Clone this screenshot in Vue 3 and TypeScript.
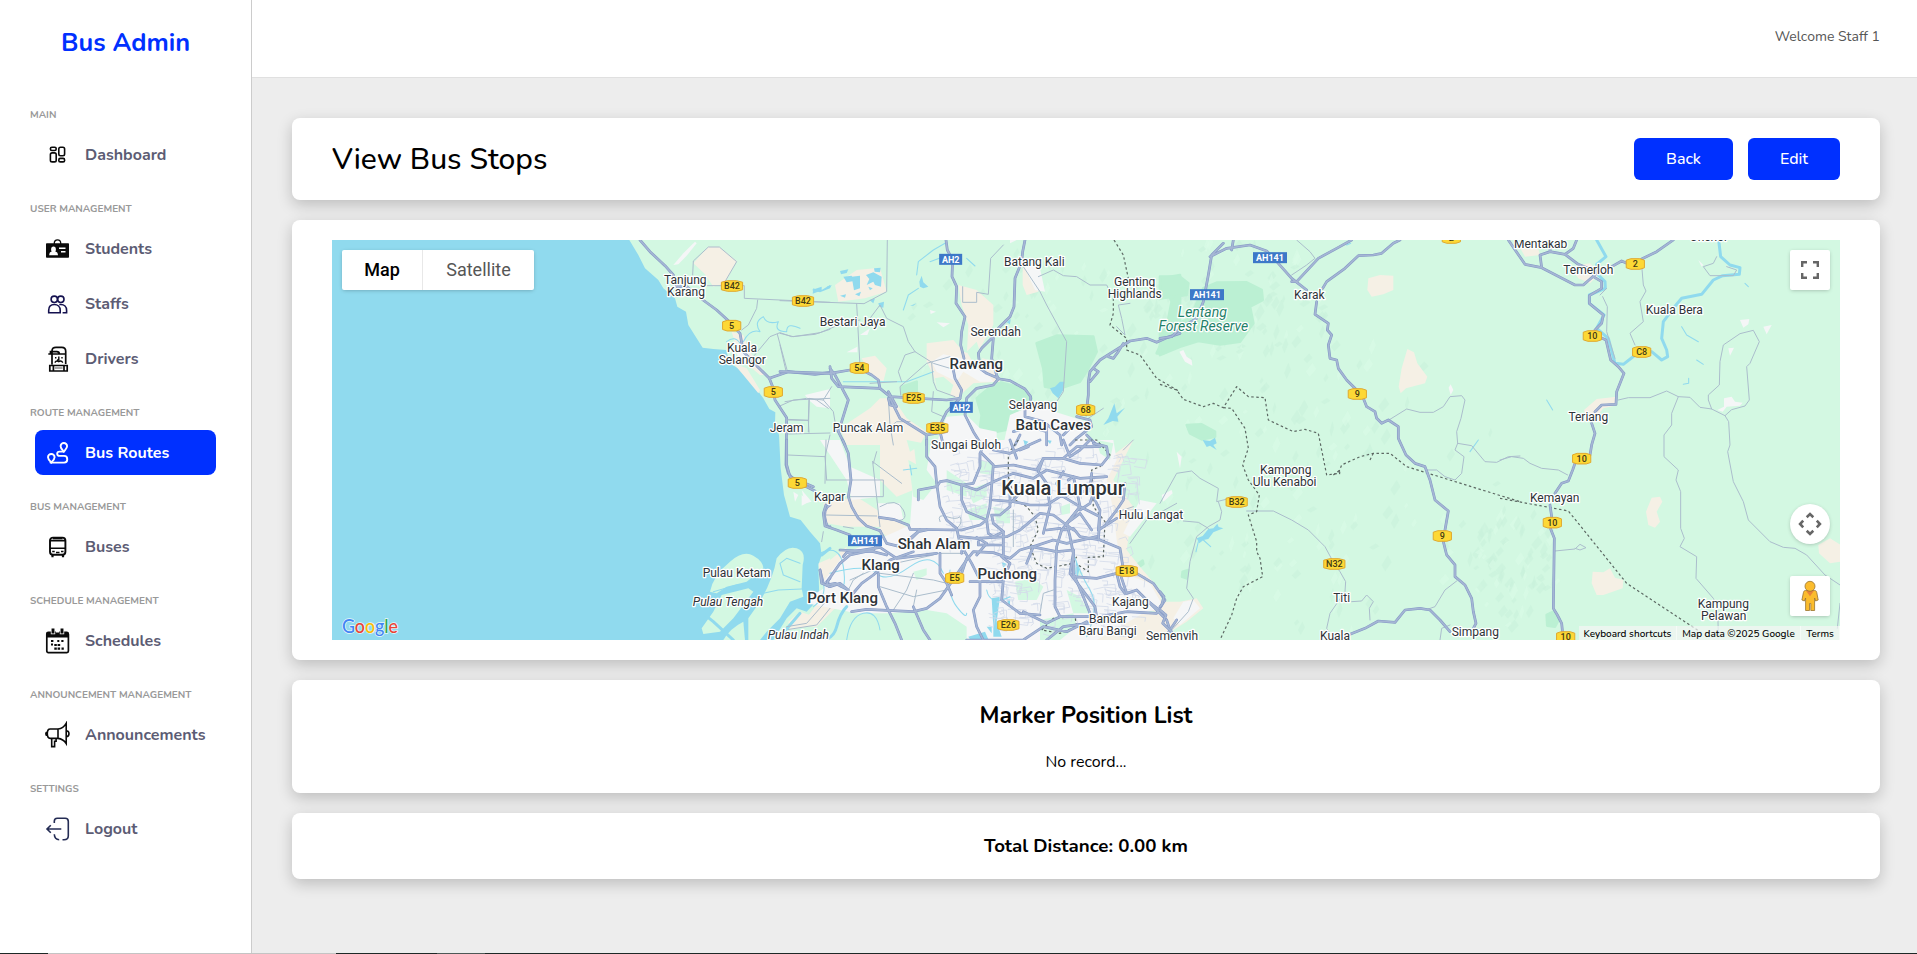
<script setup lang="ts">
type Tile = 'A' | 'B' | 'C' | 'D' | 'E'
interface NavItem { label: string; icon: string; active?: boolean }
interface NavSection { title: string; items: NavItem[] }

const sections: NavSection[] = [
  { title: 'MAIN', items: [{ label: 'Dashboard', icon: 'dashboard' }] },
  {
    title: 'USER MANAGEMENT',
    items: [
      { label: 'Students', icon: 'students' },
      { label: 'Staffs', icon: 'staffs' },
      { label: 'Drivers', icon: 'drivers' },
    ],
  },
  { title: 'ROUTE MANAGEMENT', items: [{ label: 'Bus Routes', icon: 'routes', active: true }] },
  { title: 'BUS MANAGEMENT', items: [{ label: 'Buses', icon: 'buses' }] },
  { title: 'SCHEDULE MANAGEMENT', items: [{ label: 'Schedules', icon: 'schedules' }] },
  { title: 'ANNOUNCEMENT MANAGEMENT', items: [{ label: 'Announcements', icon: 'announcements' }] },
  { title: 'SETTINGS', items: [{ label: 'Logout', icon: 'logout' }] },
]

// The map is drawn from five sheets, each with three units to the pixel.
const origin: Record<Tile, [number, number]> = {
  A: [-2, -5], B: [448, -5], C: [448, 200], D: [828, -5], E: [1168, -5],
}
const tiles: Tile[] = ['A', 'B', 'C', 'D', 'E']
const sheet = (t: Tile) => `translate(${origin[t][0]} ${origin[t][1]}) scale(.33333)`
const px = (t: Tile, x: number) => origin[t][0] + x / 3
const py = (t: Tile, y: number) => origin[t][1] + y / 3

const beige: Record<Tile, string[]> = {
  A: ['M1135 35L1168 35L1220 78L1185 145L1150 155L1125 118L1090 85Z', 'M1210 385L1250 400L1290 465L1285 475L1240 420Z', 'M1205 290L1240 300L1260 350L1310 420L1290 420L1230 370Z', 'M1375 1160L1410 1130L1440 1140L1430 1175L1380 1185Z', 'M1466 985L1500 970L1500 1040L1470 1040Z'],
  B: ['M165 150L230 105L300 98L320 170L255 190L175 200Z', 'M535 150L590 165L640 210L640 270L600 340L560 370L565 270L545 210Z', 'M440 325L520 315L550 350L640 380L660 440L580 445L530 490L470 460L460 420L440 380Z', 'M728 95L760 110L775 170L740 180L728 150Z', 'M245 370L285 362L320 400L310 440L270 420Z', 'M300 490L340 490L380 550L440 590L420 630L200 630L180 580L270 520Z'],
  C: ['M300 0L400 0L410 90L400 150L350 170L300 120Z', 'M130 190L230 170L300 215L380 260L330 300L290 260L200 260L140 250Z', 'M980 60L1060 0L1000 120L1060 200L1040 330L1080 380L1140 450L1150 520L1050 500L1010 400L970 330Z', 'M60 560L120 480L150 360L200 320L190 400L150 450L170 500L110 560Z', 'M600 440L720 400L800 400L820 500L740 520L650 480Z', 'M730 340L860 330L860 370L800 385L750 375Z', 'M900 520L1180 520L1180 600L900 600Z'],
  D: ['M625 130L660 120L700 122L700 165L670 178L635 185L622 165Z', 'M742 342L762 352L772 385L802 425L795 445L738 460L722 475L716 455L725 400Z', 'M0 1100L60 1100L110 1090L130 1120L80 1160L40 1185L0 1180Z'],
  E: ['M50 20L110 25L120 60L75 65Z', 'M210 95L270 85L300 115L270 145L235 130Z', 'M252 525L290 492L350 485L345 512L310 520L290 545L260 555Z', 'M455 788L480 785L487 800L470 830L480 860L465 878L445 870L438 830Z', 'M278 1010L310 1012L330 1000L345 1028L370 1035L368 1060L310 1080L290 1080L275 1045Z', 'M955 930L990 910L1022 930L1022 980L990 985L957 955Z'],
}
const grey: Record<Tile, string[]> = {
  A: ['M1030 90L1060 55L1095 20L1100 25L1070 62L1045 88Z', 'M1390 770L1405 780L1395 800Z', 'M1415 780L1438 800L1415 812Z', 'M1425 480L1500 462L1500 520L1470 510L1435 495Z', 'M1212 340L1235 330L1255 370L1230 375Z'],
  B: ['M450 225L468 230L452 237Z', 'M470 262L510 265L490 277Z', 'M200 352L232 335L232 352Z', 'M240 300L270 280L262 300Z', 'M80 490L110 485L150 520L110 515Z', 'M455 380L490 358L525 365L600 385L640 440L600 440L550 410L530 440L470 410Z', 'M500 545L560 540L600 580L650 590L650 630L470 630L480 590Z', 'M690 540L760 510L920 560L920 630L670 630Z', 'M690 10L720 10L690 25Z', 'M728 80L780 100L795 170L765 165L740 110Z'],
  C: ['M455 0L1000 0L1010 60L980 120L1000 210L1010 300L1030 400L1110 430L1150 500L1090 520L950 600L560 600L560 560L500 520L440 510L330 520L215 520L150 480L125 430L150 400L195 340L290 300L370 265L390 255L400 120L440 90Z', 'M120 0L180 0L210 80L300 120L300 170L215 180L200 120Z', 'M65 150L95 185L75 190Z', 'M290 190L360 190L370 240L300 235Z', 'M1080 180L1130 190L1050 290L1030 280Z', 'M140 440L90 470L80 490L230 520L220 470Z'],
  D: ['M58 350L70 345L80 365L95 375L97 392L75 380Z', 'M866 458L872 448L880 465L872 480Z', 'M5 780L35 765L38 775L10 800Z', 'M70 1100L100 1095L120 1120L60 1170L40 1150Z', 'M50 650L65 665L60 700Z'],
  E: ['M720 255L748 252L745 268L730 278Z', 'M790 275L815 270L800 298Z', 'M685 340L702 338L690 362Z', 'M672 490L695 485L705 500L728 503L720 512L680 515L668 530L652 525L672 515Z', 'M595 75L610 90L605 95Z'],
}
const forest: Record<Tile, string[]> = {
  A: [],
  B: ['M770 325L830 302L940 305L950 350L925 400L900 440L835 462L795 455L790 400Z', 'M590 490L650 440L730 460L755 490L720 540L700 580L650 590L600 580L605 540Z', 'M1145 130L1200 120L1200 330L1150 355L1130 355L1155 300L1175 200Z', 'M365 455L410 440L410 478L365 485Z'],
  C: ['M1070 375L1088 362L1090 372L1075 382Z'],
  D: ['M0 125L60 125L85 145L80 180L0 190Z', 'M130 160L170 143L260 142L305 165L308 195L270 215L280 265L240 320L180 328L115 318L60 335L0 360L0 290L90 250Z', 'M80 570L125 568L165 590L165 605L125 613L90 595Z', 'M68 1010L85 1005L80 1030L66 1025Z'],
  E: ['M140 1140L160 1130L178 1150L165 1175L142 1172Z'],
}
const park: Record<Tile, string[]> = {
  A: [], D: [], E: [],
  B: ['M560 350L590 320L610 380L590 400Z', 'M465 430L490 425L520 450L510 480L470 460Z'],
  C: ['M380 0L430 10L390 35Z', 'M600 60L640 70L635 105L600 100Z', 'M705 425L760 415L790 440L770 480L715 480Z', 'M385 60L440 90L470 130L430 180L400 170Z', 'M560 210L620 190L620 240L570 240Z', 'M220 270L300 260L290 300L240 300Z', 'M500 90L560 130L560 170L500 150Z', 'M640 200L690 210L690 250L650 250Z', 'M840 200L870 190L870 220L845 225Z', 'M240 530L300 530L330 600L230 600Z', 'M780 540L880 520L890 560L840 600L780 600Z', 'M440 560L500 570L570 600L430 600Z', 'M860 450L900 470L930 520L880 520Z', 'M950 0L1000 10L990 60L960 40Z', 'M400 395L440 385L440 405L410 420Z', 'M880 380L910 400L890 410Z', 'M560 150L620 130L620 170L580 190Z'],
}
const lakes: Record<Tile, string[]> = {
  A: ['M1445 165L1475 155L1475 165L1500 150L1500 160L1470 172Z'],
  B: ['M180 108L205 103L200 114L183 118Z', 'M190 125L215 122L222 138L200 142Z', 'M215 125L240 122L240 160L222 166Z', 'M225 178L243 170L238 184Z', 'M180 182L198 178L195 188Z', 'M282 100L302 98L300 112L284 110Z', 'M258 120L280 112L305 125L303 155L285 150L280 140L260 150L268 132Z', 'M265 155L278 160L270 166Z', 'M418 140L425 122L430 142L445 155L430 160L420 155Z', 'M810 460L825 455L840 440L853 440L850 465L835 490L818 475Z', 'M1003 505L1010 535L1035 518L1012 545L1015 560L998 558L970 570L985 550Z', 'M680 262L692 252L690 268Z', 'M268 195L285 190L280 205Z', 'M295 205L312 200L310 218L298 215Z', 'M100 160L120 168L98 176Z', 'M140 155L155 150L150 160Z', 'M410 205L400 212L390 212Z'],
  C: ['M730 0L745 5L735 18Z', 'M800 0L815 2L810 12Z', 'M635 475L660 470L650 545L665 590L640 590L640 560Z', 'M620 560L635 560L635 580Z', 'M888 360L898 390L893 410L885 400Z', 'M565 590L615 575L625 598L570 598Z', 'M680 480L690 478L690 500Z', 'M665 365L680 372L670 385Z'],
  D: ['M128 615L150 618L165 608L170 625L160 630L170 645L150 632L140 636Z', 'M110 910L128 903L145 882L160 880L172 866L176 876L190 880L160 892L145 912L130 915L118 925Z'],
  E: [],
}
const rivers: Record<Tile, string[]> = {
  A: ['M1190 320Q1215 300 1230 325', 'M1240 320Q1260 280 1290 290Q1270 260 1300 245Q1310 270 1345 260Q1330 290 1370 290Q1370 260 1410 280', 'M1300 1075L1345 1065L1415 1062', 'M1350 985L1370 970L1410 985M1350 985L1360 1020L1410 1040', 'M1150 1070L1220 1050L1270 1048'],
  B: ['M410 120L415 80L460 45L495 25', 'M415 160L385 180L370 225', 'M560 70L585 93', 'M450 80L490 65', 'M190 440L300 440L380 440L460 410'],
  C: ['M120 340Q180 310 190 380T180 440', 'M150 400Q260 370 290 400T390 380T490 400', 'M510 390Q500 460 530 500T560 520', 'M620 450Q630 500 690 470', 'M370 90L410 85M390 75L395 105', 'M200 600Q210 530 250 520T300 570', 'M880 340Q900 400 930 450T920 590', 'M130 430Q140 470 100 500'],
  D: ['M560 30L572 25', 'M108 950L115 920', 'M130 915L152 935', 'M930 650L955 615'],
  E: ['M545 275L560 300L595 320', 'M590 375L610 388', 'M550 448L566 445L566 430', 'M735 145L745 155', 'M140 495L158 525'],
}
const wideRivers: Record<Tile, string[]> = {
  A: ['M1500 940L1475 960', 'M1210 1215L1150 1160L1100 1120'],
  B: [],
  C: ['M200 500Q180 520 170 560T120 600', 'M60 520L0 590'],
  D: [],
  E: ['M290 15L318 65L290 88L295 120L315 140L316 160L268 180L268 205L312 240L290 280L325 310L345 385L370 388L425 345L455 350L485 375L503 365L500 345L485 310L490 260L520 220L545 190L605 178L640 135L668 122L718 118L720 98L690 90L662 65L656 15'],
}
const minor: Record<Tile, string[]> = {
  A: ['M1088 120L1090 78L1135 36L1168 36L1220 80L1185 140', 'M1283 195L1280 220L1255 270L1235 285', 'M1270 365L1320 305L1350 293L1385 305L1455 298L1500 283', 'M1342 298L1372 408', 'M1345 515L1390 495L1500 490', 'M1373 553L1435 556L1437 490L1460 495L1495 520M1435 556L1437 592', 'M1375 597L1500 594', 'M1373 660L1485 665L1500 600M1485 665L1490 735', 'M1130 152L1243 152L1243 190L1500 202', 'M1475 920L1480 890', 'M1500 1120L1460 1170L1365 1185'],
  B: ['M0 197L252 206L320 170L322 15', 'M0 295L40 305L120 293L195 262L240 255', 'M0 330L18 408', 'M230 206L240 395', 'M270 250L300 210L320 250L370 275L385 320L405 350L460 385L510 400', 'M405 350L375 360L355 410L365 440M510 365L440 385L360 455L362 480', 'M548 155L548 202L590 202L590 172L625 178L632 70L670 30', 'M730 95L780 170L800 210L860 320L850 470L830 500', 'M775 125L820 105L850 122L890 125L930 150L980 150L990 170M1050 205L1015 210L1025 250L1035 300L1010 275', 'M455 385L460 440L470 465L525 485M270 445L350 440M460 470L455 530L490 545', 'M15 500L80 490L130 495L160 530L170 590M88 490L85 590M20 555L85 556M130 495L155 455', 'M925 550L970 520M325 490L330 570L340 630', 'M390 560L350 560L325 580'],
  C: ['M138 0L135 130M140 120L310 120L310 170L210 170', 'M138 225L290 228M278 65L300 260M278 65L365 130M290 35L280 70M300 200Q350 170 370 210T330 240', 'M190 260L220 265M480 245Q470 220 500 230T540 230Q550 250 530 265', 'M300 440L400 470L500 450M300 400L460 420L500 430M340 510L380 450L400 400M210 420L300 380L460 345', 'M820 450L790 460L780 520M1000 220L1060 200M1190 190L1100 240L1050 310', 'M400 500L410 450M190 480L220 420L250 400M20 560L80 550L150 470', 'M1030 30L1060 0M440 340L560 340M700 320L700 210'],
  D: ['M410 15L450 50L465 70L440 90L395 120', 'M690 553L740 522L780 532L820 532L850 515L870 485L905 482L915 495L903 550L890 590L893 625L935 632L975 680L1010 682L1045 665L1080 663M893 625L885 645L912 665L905 715L885 735L855 725L830 705L800 705', 'M0 805L50 715L95 708L120 730L175 760L170 800L210 790M175 800L185 830L180 855L145 875L110 905L90 980L80 1060L100 1090L85 1130L35 1185', 'M70 858L115 862L145 880', 'M260 828L340 828L395 855L445 885L495 935L522 985L540 1010L557 1040L555 1070L510 1135L500 1180L510 1195', 'M575 1100L605 1098L620 1080L640 1100L628 1120L630 1155', 'M890 1038L855 1065L825 1115L805 1122', 'M840 1215L845 1180L870 1170'],
  E: ['M425 90L430 150L438 168L420 200L430 260L390 295L405 330', 'M308 185L322 215L320 290L345 370M300 180L320 160', 'M355 495L385 488L450 488L500 468L535 485L570 487L600 517L635 522L675 542L695 524L735 513L748 495L740 395L750 385L778 320L760 286L720 296L670 330L660 380L658 450L625 480L625 495L635 522', 'M535 485L515 535L515 570L492 600L492 665L535 705L528 735L542 770L542 880L553 910L540 935L590 965L588 1030L640 1090L653 1120L655 1200', 'M675 542L686 560L690 630L683 650L700 740L730 800L745 855L810 920L850 937L885 940L920 960L975 1020L1020 1050', 'M0 675L35 665L70 670L90 685L125 700L175 705L203 720', 'M165 948L225 942L240 928L258 938L240 945L225 940', 'M1020 1105L1012 1180', 'M650 65L640 85L610 95L630 122L700 122L710 105L680 95'],
}
const majors: Record<Tile, string[]> = {
  A: ['M930 15L960 50L1005 92L1030 120L1040 155L1070 155L1115 192L1160 225L1200 262L1230 295L1240 350L1280 392L1318 430L1328 455L1335 495L1370 548L1368 690L1375 715L1395 738L1455 768', 'M1318 430L1375 410L1455 418L1500 412', 'M1500 810Q1480 820 1485 850T1500 875', 'M1500 1055L1480 1045L1470 1005M1500 1030L1490 1040L1500 1050'],
  B: ['M498 15L502 45L518 75L516 125L530 155L528 205L555 245L545 290L542 330L552 370M520 405L525 430L545 465L540 490L500 530L485 560L490 590', 'M0 410L150 415L210 405L240 402L275 420L295 435L300 460L330 485L500 495L540 490', 'M150 395L155 430L175 455L300 460M150 400L165 420L205 495L185 560L175 590L195 630M325 470L350 515L330 510L325 490M330 490L360 550L440 600L440 630M440 600L500 590', 'M735 15L728 50L725 80L705 130L702 215L690 245L655 280M640 305L605 340L595 355L600 400L620 415L660 432L690 437L735 462L752 485L752 520M640 310L635 370L650 420L655 432L640 450L590 460L560 490L555 540L580 590L605 630', 'M1200 295L1160 308L1130 322L1100 310L1050 318L1015 340L960 375L930 410L925 440L925 480L918 540M1015 350L1000 370L985 365M930 440L955 410L940 400M1030 325L1015 350', 'M735 520L735 545L790 560L840 600L845 630M700 590L750 575L800 590M720 600L705 630M890 545L930 555L935 575L890 610L870 630M920 600L950 630M850 600L870 580', 'M800 570L800 630M480 590L490 630'],
  C: ['M20 0L20 75L30 110L100 140M188 0L205 40L213 120L205 170L215 200L235 235L260 258L300 272', 'M138 195L130 220L135 258L170 270L210 285M120 390L125 430L150 440L180 430L205 450L165 430L140 435L145 420L180 370L210 345L280 330L300 300', 'M298 232L340 238L385 255L390 268L545 270L600 255L620 240', 'M190 350L200 338L300 322L350 355L470 340M215 465L245 430L280 405L330 360L400 335', 'M215 515L260 508L400 515L440 505L480 475L505 440L560 360L580 335L640 338L690 355L720 330L755 320L830 335L880 330', 'M295 400L295 440L320 500L345 550L365 600M400 500L430 570L450 600', 'M440 0L440 50L465 80L470 130L480 200L500 240L530 265L540 310L575 370L600 420L600 470L580 510L590 560L610 600', 'M415 180L415 150L470 140L480 125L500 122L545 135L580 130L600 80L600 40L605 30', 'M545 135L545 180L560 215L620 240L630 200L640 75L605 40M545 135L590 150L640 125', 'M440 270L415 275L395 295M540 290L590 295L680 290L720 270L780 220L820 225L880 270', 'M595 305L595 315L670 315M620 240L625 280L640 290L670 275L670 350M590 345L620 310L590 292', 'M640 80L700 75L770 90L790 55L850 55L900 70L965 75L985 50L980 20L940 10M640 125L700 100L760 115L800 90L840 100L900 115L980 110M640 30L690 40L780 0M790 55L775 95L800 130L810 200L790 280', 'M690 120L690 200L660 225L635 225L640 250L670 275M640 180L700 185L750 195L800 195L840 170L930 150M720 160L690 190', 'M870 50L850 0M870 50L900 30L930 0M850 55L890 20L960 20M850 95L830 130L850 170L900 200L960 230L955 300', 'M865 120L880 110L890 150L900 200L870 240L845 270L830 320L825 420L825 500L840 530', 'M935 100L930 150L960 210L955 270L1010 235M900 210L930 190L940 160M900 200L860 250L870 290L880 340L870 400L900 440L945 500L950 530', 'M845 270L880 265L900 290L960 300L1020 325L1030 390M880 330L880 400L910 470L930 520M880 410L950 415L1010 400', 'M1020 400L1040 460L1070 450L1110 490L1160 540L1180 600M1070 400L1120 430L1155 480L1130 520L1040 515L960 530L840 530L800 550L730 515M665 350L690 370L670 420L665 480L720 520L780 525M570 425L665 425', 'M480 340L480 400L500 430L515 465M760 320L820 300L860 310L950 290M800 270L840 265', 'M1010 400L1020 440L1035 460M1150 520L1100 480M560 355L545 400M545 340L545 300', 'M960 545L850 560L800 600M1190 540L1150 600M560 600L730 600L790 560L860 575L920 545', 'M710 55L690 0M760 320L740 370M745 20L720 30M860 250L900 220L935 270M1035 130L1030 180L1010 210L980 250', 'M180 330L280 335L320 345M300 272L320 310L360 320L420 270'],
  D: ['M0 310L35 305L60 280L110 250L130 200L145 120L155 60L190 25M150 65L200 40L270 30L320 48L355 85L395 130L440 165M220 15L215 45M395 140L410 140L475 70L530 40L575 15M488 160L500 140L555 100L595 62L640 60L665 55L700 25L720 15', 'M470 200L465 238L505 265L502 285L515 300L505 330L510 370L530 375L535 400L560 435L590 465L610 490L620 515L645 530L650 550L665 565L685 555L715 575L715 610L738 660L765 685L795 695L810 735L825 795L865 828L855 885L850 920L860 960L885 990L885 1025L915 1050L935 1090L940 1130L948 1165L940 1180', 'M570 1198L615 1180L655 1158L705 1162L735 1125L780 1120L810 1125L840 1155L870 1190', 'M0 1070L12 1085L5 1110L0 1115M0 1125L18 1140L8 1165L35 1190'],
  E: ['M25 15L75 88L125 98L225 150L250 150L290 115M150 20L150 50L195 58L235 88L290 110M150 50L120 60L125 98M195 58L220 40L230 15M335 95L365 78L380 85M425 72L470 50L520 15', 'M280 125L305 140L305 160L268 182L268 205L310 240L305 265L285 285M285 300L318 315L332 375L355 395L372 415L350 470L348 508L305 510L285 530M275 565L285 595L275 630L270 660M225 685L218 705L205 738L185 745L165 775M150 810L155 845M152 882L163 910L160 1120L172 1140L185 1165L188 1195'],
}
const borders: Record<Tile, string[]> = {
  A: [],
  B: ['M1002 15L1030 60L1045 130M1000 190L1000 235L990 270L1040 310L1040 345L1080 360L1130 430L1200 470'],
  C: ['M715 0L685 40L685 110L705 180L740 200L765 230L775 270L750 320L770 370L800 385L880 370L890 350M885 0L950 0L990 45L960 80L935 90L940 200L975 245L970 350L925 352L925 395L895 375M785 570L820 535L885 530L890 560L840 580Z'],
  D: ['M0 448L50 465L70 493L130 515L160 505L190 518L230 455L265 485L315 488L325 555L400 590L435 583L475 595L500 720L535 715L545 690L600 665L640 655L690 655L740 695L1080 800', 'M190 518L215 520L255 580L265 640L248 690L265 735L298 780L290 830L265 840L290 920L290 950L300 970L308 1025L250 1055L230 1090L215 1140L180 1215', 'M640 655L630 675M520 720L540 705L538 722'],
  E: ['M0 790L120 812L205 828L235 865L380 1045L600 1190'],
}

let seed = 20251
const rnd = () => {
  seed = (seed * 1103515245 + 12345) % 2147483648
  return seed / 2147483648
}

// Relief facets of the highland areas.
const facets: { d: string; dark: boolean }[] = []
const ranges: [number, number, number, number][] = [
  [905, 200, 150, 170], [1000, 250, 170, 150], [700, 100, 130, 90], [1180, 330, 45, 60], [900, 60, 90, 60],
]
for (const [cx, cy, rx, ry] of ranges) {
  for (let i = 0; i < 75; i++) {
    const a = rnd() * 6.283
    const r = Math.sqrt(rnd())
    const x = cx + Math.cos(a) * rx * r
    const y = cy + Math.sin(a) * ry * r
    const w = 2 + rnd() * 5
    const h = 3 + rnd() * 8
    facets.push({
      d: `M${x.toFixed(1)} ${y.toFixed(1)}l${w.toFixed(1)} ${(-h).toFixed(1)}l${(w * 0.6).toFixed(1)} ${(h * 0.7).toFixed(1)}l${(-w).toFixed(1)} ${(h * 0.9).toFixed(1)}z`,
      dark: rnd() > 0.35,
    })
  }
}

// Local streets of the metropolitan area.
let streets = ''
for (let i = 0; i < 330; i++) {
  const x = 610 + rnd() * 190
  const y = 208 + rnd() * 180
  if (x < 650 && y > 310) continue
  const w = 4 + rnd() * 12
  const h = 3 + rnd() * 9
  const s = (rnd() - 0.5) * 5
  streets += `M${x.toFixed(1)} ${y.toFixed(1)}l${w.toFixed(1)} ${s.toFixed(1)}l${(-s).toFixed(1)} ${h.toFixed(1)}${rnd() > 0.5 ? `l${(-w * 0.7).toFixed(1)} ${(-s).toFixed(1)}` : ''}`
}

type Label = [Tile, number, number, string, string?]
const labels: Label[] = [
  ['A', 1066, 136, 'Tanjung'], ['A', 1068, 172, 'Karang'], ['A', 1236, 340, 'Kuala'], ['A', 1237, 376, 'Selangor'],
  ['A', 1370, 580, 'Jeram'], ['A', 1220, 1015, 'Pulau Ketam'], ['A', 1194, 1102, 'Pulau Tengah', 'it'], ['A', 1405, 1200, 'Pulau Indah', 'it'],
  ['B', 218, 262, 'Bestari Jaya'], ['B', 763, 81, 'Batang Kali'], ['B', 1064, 142, 'Genting'], ['B', 1064, 178, 'Highlands'],
  ['B', 647, 292, 'Serendah'], ['B', 759, 512, 'Selayang'], ['B', 264, 580, 'Puncak Alam'], ['C', 558, 15, 'Sungai Buloh'],
  ['B', 589, 388, 'Rawang', 'town'], ['B', 820, 572, 'Batu Caves', 'town'], ['C', 149, 172, 'Kapar'],
  ['C', 849, 145, 'Kuala Lumpur', 'city'], ['C', 1113, 226, 'Hulu Langat'], ['C', 462, 313, 'Shah Alam', 'town'],
  ['C', 302, 376, 'Klang', 'town'], ['C', 682, 403, 'Puchong', 'town'], ['C', 188, 474, 'Port Klang', 'town'],
  ['C', 1051, 488, 'Kajang'], ['C', 984, 538, 'Bandar'], ['C', 983, 574, 'Baru Bangi'], ['C', 1176, 588, 'Semenyih'],
  ['D', 448, 181, 'Karak'], ['D', 127, 232, 'Lentang', 'green'], ['D', 130, 274, 'Forest Reserve', 'green'],
  ['D', 377, 706, 'Kampong'], ['D', 374, 742, 'Ulu Kenaboi'], ['D', 545, 1089, 'Titi'], ['D', 525, 1203, 'Kuala'], ['D', 946, 1192, 'Simpang'],
  ['E', 122, 28, 'Mentakab'], ['E', 265, 105, 'Temerloh'], ['E', 523, 226, 'Kuala Bera'], ['E', 265, 547, 'Teriang'],
  ['E', 164, 790, 'Kemayan'], ['E', 670, 1108, 'Kampung'], ['E', 671, 1144, 'Pelawan'], ['E', 627, 8, 'Chenor'],
]
const shift = (k?: string) => (k === 'city' ? 6.4 : k === 'town' ? 4.6 : k === 'green' ? 4.4 : 3.7)

const shields: [Tile, number, number, string][] = [
  ['A', 1206, 153, 'B42'], ['A', 1419, 198, 'B42'], ['A', 1205, 272, '5'], ['A', 1330, 471, '5'], ['A', 1402, 744, '5'],
  ['B', 238, 399, '54'], ['B', 401, 489, 'E25'], ['B', 472, 579, 'E35'], ['B', 917, 525, '68'],
  ['C', 524, 414, 'E5'], ['C', 685, 555, 'E26'], ['C', 1040, 393, 'E18'],
  ['D', 230, 801, 'B32'], ['D', 523, 987, 'N32'], ['D', 592, 477, '9'], ['D', 847, 903, '9'], ['D', 874, 9, '2'],
  ['E', 406, 87, '2'], ['E', 277, 303, '10'], ['E', 425, 351, 'C8'], ['E', 245, 671, '10'], ['E', 157, 863, '10'], ['E', 197, 1206, '10'],
]
const hex = (t: string) => {
  const w = t.length > 2 ? 10.6 : 9.1
  return `M${-w} -3.8L-4.5 -5.3H4.5L${w} -3.8V3.8L4.5 5.3H-4.5L${-w} 3.8Z`
}
const highways: [Tile, number, number, string][] = [
  ['B', 512, 73, 'AH2'], ['B', 544, 517, 'AH2'], ['C', 255, 302, 'AH141'], ['D', 141, 179, 'AH141'], ['D', 330, 68, 'AH141'],
]
const brand: [string, string][] = [['G', '#4285f4'], ['o', '#ea4335'], ['o', '#fbbc04'], ['g', '#4285f4'], ['l', '#34a853'], ['e', '#ea4335']]
</script>

<template>
  <div class="app">
    <aside class="sidebar">
      <h1 class="logo">Bus Admin</h1>
      <nav>
        <section v-for="s in sections" :key="s.title" class="group">
          <div class="group-title">{{ s.title }}</div>
          <div class="group-items">
            <a v-for="i in s.items" :key="i.label" class="item" :class="{ active: i.active }">
              <svg class="icon" :class="i.icon" viewBox="0 0 28 28" fill="none" stroke="currentColor" stroke-width="1.6">
                <template v-if="i.icon === 'dashboard'">
                  <rect x="6.4" y="6.2" width="5.8" height="3.3" rx="1.5" />
                  <rect x="6.4" y="11.9" width="5.8" height="9" rx="1.7" />
                  <rect x="14.8" y="6.2" width="5.8" height="8.6" rx="1.7" />
                  <rect x="14.8" y="17.4" width="5.8" height="3.5" rx="1.5" />
                </template>
                <template v-else-if="i.icon === 'students'">
                  <path d="M10.3 9V8a3.2 3.2 0 0 1 6.4 0v1" stroke-width="1.3" />
                  <rect x="2" y="8.3" width="23" height="14.4" rx=".8" fill="currentColor" stroke="none" />
                  <path d="M9.5 11.6c1.7 0 2.4 1.2 2.4 2.8 0 1-.2 1.7-.6 2.2 1.7.4 2.5 1.3 2.700 3.700H5.200c.1-2.400.9-3.300 2.500-3.700-.4-.5-.6-1.200-.6-2.200 0-1.600.8-2.800 2.400-2.800zM15 12.600h6.500v1.500H15zM17 16h4.500v1.400H17z" fill="#fff" stroke="none" />
                </template>
                <template v-else-if="i.icon === 'staffs'">
                  <circle cx="10.3" cy="9.3" r="3.2" />
                  <circle cx="16.8" cy="9.3" r="3.2" />
                  <path d="M4.7 22.7v-2.5c0-3.5 2.3-5.7 5.6-5.7s5.9 2.2 5.9 5.7v2.5zM15.300 14.500h1.500c3.400 0 5.800 2.300 5.800 5.900v2.300h-4" />
                </template>
                <template v-else-if="i.icon === 'drivers'">
                  <path d="M8 9V6c0-2.600 1.500-3.700 4-3.700h5.800c2.600 0 3.900 1.300 3.900 3.900V19M8 9v10.500M4.300 9h17.400M6.500 9V6.600h6.300c1.600 0 2.500.9 2.500 2.400M5.800 26V20.500h3.600V26zM20 26V20.500h3.200V26zM9.400 20.500H20M5.800 26h17.400" stroke-width="1.7" />
                  <path d="M14.800 11.500v3.200h-1.500M11 12.800h1.400M17.300 12.800h1.400M10.800 17.600c.8-1.300 2.400-1.900 4-1 1.600-.9 3.200-.3 4 1" stroke-width="1.4" />
                  <path d="M10.800 23h7.800" stroke-width=".7" />
                </template>
                <template v-else-if="i.icon === 'routes'">
                  <path d="M19.800 12.600c-1.500-1.800-3.200-3.300-3.200-5.300a3.200 3.200 0 0 1 6.500 0c0 2-1.800 3.500-3.300 5.300zM7.300 23.500c-1.500-1.600-3.300-3.200-3.300-5.200a3.300 3.300 0 0 1 6.600 0c0 2-1.800 3.600-3.300 5.200z" stroke-width="1.9" />
                  <path d="M19.800 12.600h-4.300c-3 0-3.200 4.300 0 4.300h4.600c4.200 0 4.200 6.700 0 6.700H6.500" stroke-width="1.9" stroke-linecap="round" />
                </template>
                <template v-else-if="i.icon === 'buses'">
                  <rect x="6" y="4.600" width="15.400" height="17.200" rx="3" stroke-width="1.900" />
                  <path d="M6 7.600h15.400M6 15.300h15.400" stroke-width="1.600" />
                  <path d="M9 5.600h9.500" stroke-width="1.400" />
                  <path d="M8.500 22v2.300M19 22v2.300" stroke-width="2.200" />
                  <path d="M8.200 18.500h2.500M17 18.500h2.500M12 19.500h3.500" stroke-width="1.500" />
                </template>
                <template v-else-if="i.icon === 'schedules'">
                  <rect x="2.800" y="5.800" width="21.600" height="19.800" rx="1.500" stroke-width="1.700" />
                  <path d="M2.200 6.500c0-1.300.8-2 2-2h18.600c1.200 0 2 .7 2 2v4H2.200z" fill="currentColor" stroke="none" />
                  <path d="M9 2v5.200M18 2v5.200" stroke="#fff" stroke-width="4.400" />
                  <path d="M13.500 3.500v2" stroke="#fff" stroke-width="3" />
                  <path d="M9 1.600v5M18 1.600v5" stroke-width="2.900" />
                  <path d="M7 14h2.400M13.300 14h2M17.300 14h2.200M7 17.500h2M10.300 18h2.500M13.600 18h2.600M10.300 21.700h2.500M13.600 21.700h2.500M17.500 21.700h2.300" stroke-width="2.200" />
                </template>
                <template v-else-if="i.icon === 'announcements'">
                  <path d="M14 8H6.200C3.700 8 3.300 9.600 3.300 12.600s.4 4.800 2.900 4.800H14zM14 8c3.500-.3 6.300-2.200 8.200-5.600v20.200c-1.900-3-4.700-4.900-8.200-5.200M22.200 9.800c3.700.2 3.700 5.700 0 5.800M3.300 11c-2 0-2 3.400 0 3.400M7.700 17.400V25.600h2.900v-5.400h1.500v-2.800" />
                </template>
                <template v-else>
                  <path d="M10.300 8V6.200c0-2 1-3 3-3h7.800c2.200 0 3.200 1.100 3.200 3.200v14.300c0 2.500-1.300 4-4.300 4h-1.500M15.200 24.700c-3 0-4.700-1.500-4.900-5.400M3 14h14.300M6.800 10.300L3 14l3.800 3.700" />
                </template>
              </svg>
              <span class="item-label">{{ i.label }}</span>
            </a>
          </div>
        </section>
      </nav>
    </aside>

    <div class="page">
      <header class="topbar"><span class="welcome">Welcome Staff 1</span></header>
      <main class="content">
        <section class="card head">
          <h2>View Bus Stops</h2>
          <div class="actions">
            <button class="back">Back</button>
            <button class="edit">Edit</button>
          </div>
        </section>

        <section class="card map-card">
          <div class="map">
            <svg class="canvas" viewBox="0 0 1508 400">
              <rect width="1508" height="400" fill="#90daee" />
              <g :transform="sheet('A')" fill="#d3f8e2">
                <path d="M898 15L925 60L945 100L985 135L1000 160L1035 190L1042 215L1068 230L1075 270L1100 310L1118 338L1150 342L1188 345L1200 385L1240 410L1270 450L1300 490L1318 522L1336 532L1335 565L1347 600L1352 700L1362 780L1380 845L1412 855L1440 890L1470 925L1475 960L1465 990L1468 1090L1430 1130L1400 1120L1370 1150L1330 1215L4530 1215L4530 15Z" />
                <path d="M1200 980Q1240 945 1270 962T1300 1000L1250 1040L1190 1055L1160 1075L1140 1070Q1150 1020 1200 980Z" />
                <path d="M1340 970Q1370 930 1400 940T1418 990L1415 1060L1420 1085L1380 1100L1350 1150L1310 1190L1290 1215L1255 1215L1255 1150L1290 1100Q1330 1030 1340 970Z" />
                <path d="M1175 1080L1255 1060L1270 1070L1210 1150L1170 1190L1120 1197L1115 1180L1150 1130Z" />
                <path d="M1240 1160L1245 1215L1180 1215Q1200 1180 1240 1160Z" />
              </g>
              <path v-for="(f, n) in facets" :key="'f' + n" :d="f.d" :fill="f.dark ? '#c9f1da' : '#dafbe8'" opacity=".55" />
              <g v-for="t in tiles" :key="'p' + t" :transform="sheet(t)">
                <path v-for="d in forest[t]" :key="d" :d="d" fill="#bbf0d3" stroke="#bbf0d3" stroke-width="8" stroke-linejoin="round" />
                <path v-for="d in beige[t]" :key="d" :d="d" fill="#f5f0e5" />
                <path v-for="d in grey[t]" :key="d" :d="d" fill="#f5f6f7" />
                <path v-for="d in park[t]" :key="d" :d="d" fill="#d3f8e2" />
                <path v-for="d in lakes[t]" :key="d" :d="d" fill="#90daee" />
              </g>
              <path :d="streets" fill="none" stroke="#d3dbea" stroke-width=".8" />
              <g v-for="t in tiles" :key="'r' + t" :transform="sheet(t)" fill="none" stroke-linejoin="round" stroke-linecap="round">
                <path v-for="d in rivers[t]" :key="d" :d="d" stroke="#90daee" stroke-width="3.2" />
                <path v-for="d in wideRivers[t]" :key="d" :d="d" stroke="#90daee" stroke-width="9" />
                <path v-for="d in minor[t]" :key="d" :d="d" stroke="#abbdcc" stroke-width="3" />
                <path v-for="d in borders[t]" :key="d" :d="d" stroke="#5c6863" stroke-width="3.6" stroke-dasharray="7.5 7.5" stroke-linecap="butt" />
                <path v-for="d in majors[t]" :key="d" :d="d" stroke="#8397c5" stroke-width="8.2" />
                <path v-for="d in majors[t]" :key="'i' + d" :d="d" stroke="#a5b6d4" stroke-width="5" />
              </g>
              <g v-for="(s, n) in shields" :key="'s' + n" :transform="`translate(${px(s[0], s[1])} ${py(s[0], s[2])})`">
                <path :d="hex(s[3])" fill="#fdd835" stroke="#e0a82e" />
                <text class="shield" y="3.2">{{ s[3] }}</text>
              </g>
              <g v-for="(s, n) in highways" :key="'h' + n" :transform="`translate(${px(s[0], s[1])} ${py(s[0], s[2])})`">
                <rect :x="s[3].length > 3 ? -17 : -11.5" y="-5.5" :width="s[3].length > 3 ? 34 : 23" height="11" fill="#3d78c8" />
                <text class="highway" y="3.2">{{ s[3] }}</text>
              </g>
              <text v-for="(l, n) in labels" :key="'l' + n" class="place" :class="l[4]" :x="px(l[0], l[1])" :y="py(l[0], l[2]) + shift(l[4])">{{ l[3] }}</text>
              <text class="brand" x="10" y="392.500" textLength="56" lengthAdjust="spacingAndGlyphs"><tspan v-for="(b, n) in brand" :key="n" :fill="b[1]">{{ b[0] }}</tspan></text>
            </svg>

            <div class="types"><div class="type on">Map</div><div class="type">Satellite</div></div>
            <div class="ctl full">
              <svg viewBox="0 0 18 18" width="18" height="18" fill="none" stroke="#666" stroke-width="2.4"><path d="M1.200 6V1.200H6M12 1.200h4.800V6M16.800 12v4.800H12M6 16.800H1.200V12" /></svg>
            </div>
            <div class="ctl pan">
              <svg viewBox="0 0 24 24" width="24" height="24" fill="none" stroke="#666" stroke-width="2.600"><path d="M8.700 5.200L12 2.100l3.300 3.100M8.700 18.800l3.300 3.100 3.300-3.100M5.200 8.700L2.100 12l3.100 3.300M18.800 8.700l3.100 3.300-3.100 3.300" /></svg>
            </div>
            <div class="ctl peg">
              <svg viewBox="0 0 18 32" width="18" height="32">
                <path d="M4.500 10.500h9c1.500 0 2 .8 2.300 2.200l1.400 7.300-2.600 1-1-3v12.500H9.800v-7H8.500v7H4.600V18l-1.200 3-2.500-1 1.500-7.300c.3-1.400.8-2.200 2.100-2.200z" fill="#fbbc2d" stroke="#987331" stroke-width=".8" />
                <path d="M5 10.800h8l-4 5.400z" fill="#e8833a" />
                <circle cx="9" cy="6.300" r="5" fill="#fbbc2d" stroke="#987331" stroke-width=".8" />
              </svg>
            </div>
            <div class="legal"><span class="keys">Keyboard shortcuts</span><span class="data">Map data ©2025 Google</span><span class="terms">Terms</span></div>
          </div>
        </section>

        <section class="card list">
          <h3>Marker Position List</h3>
          <p>No record...</p>
        </section>
        <section class="card total"><h4>Total Distance: 0.00 km</h4></section>
      </main>
    </div>
    <div class="edge"></div>
  </div>
</template>

<style>
html, body { margin: 0; overflow: hidden; }
</style>

<style scoped>
.app { display: flex; position: relative; width: 100vw; height: 954px; overflow: hidden; background: #ededed; font-family: Nunito, Lato, "Open Sans", sans-serif; color: #000; }
.sidebar { box-sizing: border-box; width: 252px; flex: none; background: #fff; border-right: 1px solid #ccc; }
.logo { margin: 0; height: 96px; box-sizing: border-box; padding-top: 28px; font-size: 25.4px; line-height: 30px; font-weight: 700; color: #0030ff; text-align: center; }
.group { padding-bottom: 13px; }
.group-title { height: 36px; box-sizing: border-box; line-height: 36px; padding: 1px 0 0 30px; font-size: 10px; font-weight: 700; color: #999; white-space: nowrap; }
.group-items { display: flex; flex-direction: column; gap: 10px; padding: 0 35px; }
.item { display: flex; align-items: center; gap: 13px; height: 45px; padding-left: 9px; border-radius: 8px; color: #5c5c74; }
.item-label { font-size: 16px; font-weight: 700; white-space: nowrap; }
.icon { width: 28px; height: 28px; flex: none; color: #0a0a0a; }
.icon.staffs { color: #14114f; }
.icon.logout { color: #242c54; }
.item.active { background: #0030ff; color: #fff; }
.item.active .icon { color: #fff; }
.page { flex: 1; min-width: 0; }
.topbar { box-sizing: border-box; height: 78px; padding: 0 37px 4px 0; background: #fff; border-bottom: 1px solid #e0e0e0; display: flex; align-items: center; justify-content: flex-end; }
.welcome { font-size: 14px; color: #555; }
.content { display: flex; flex-direction: column; gap: 20px; padding: 40px 37px 0 40px; }
.card { box-sizing: border-box; background: #fff; border-radius: 8px; box-shadow: 0 5px 15px rgba(0, 0, 0, .2); }
.head { height: 82px; padding: 0 40px; display: flex; align-items: center; justify-content: space-between; }
.head h2 { margin: 0; font-size: 30px; font-weight: 500; }
.actions { display: flex; gap: 15px; }
.actions button { height: 42px; padding: 0; border: 0; border-radius: 6px; background: #0030ff; color: #fff; font-family: inherit; font-size: 16px; font-weight: 500; }
.back { width: 99px; }
.edit { width: 92px; }
.map-card { height: 440px; padding: 20px 40px; }
.map { position: relative; height: 400px; overflow: hidden; font-family: Roboto, sans-serif; }
.canvas { display: block; width: 1508px; height: 400px; }
.place { font: 400 12px Roboto, sans-serif; text-anchor: middle; fill: #2e3338; stroke: #fff; stroke-width: 2.5px; stroke-linejoin: round; paint-order: stroke; }
.place.it { font-style: italic; }
.place.town { font-size: 15px; font-weight: 500; }
.place.city { font-size: 20px; font-weight: 500; stroke-width: 3px; }
.place.green { font-size: 14px; font-style: italic; fill: #1f8169; }
.shield { font: 500 9px Roboto, sans-serif; text-anchor: middle; fill: #423a16; }
.highway { font: 700 9px Roboto, sans-serif; text-anchor: middle; fill: #fff; }
.brand { font: 500 18.5px Lato, sans-serif; stroke: #e8f7fb; stroke-width: 1.5px; paint-order: stroke; }
.types { position: absolute; left: 10px; top: 10px; display: flex; height: 40px; background: #fff; border-radius: 2px; box-shadow: 0 1px 4px -1px rgba(0, 0, 0, .3); font-size: 18px; line-height: 40px; text-align: center; color: #565656; }
.type { width: 111px; }
.type.on { width: 80px; color: #000; font-weight: 500; border-right: 1px solid #e8e8e8; }
.ctl { position: absolute; left: 1458px; width: 40px; height: 40px; display: flex; align-items: center; justify-content: center; background: #fff; border-radius: 2px; box-shadow: 0 1px 4px -1px rgba(0, 0, 0, .3); }
.full { top: 10px; }
.pan { top: 264px; border-radius: 50%; }
.peg { top: 336px; }
.legal { position: absolute; right: 0; bottom: 0; display: flex; height: 14px; font: 500 10px/16px Nunito, Lato, sans-serif; color: #000; background: rgba(245, 245, 245, .7); white-space: nowrap; }
.legal span { box-sizing: border-box; border-right: 1px solid rgba(255, 255, 255, .5); text-align: center; }
.keys { width: 98px; }
.data { width: 124px; }
.terms { width: 39px; }
.list { height: 113px; text-align: center; }
.list h3 { margin: 0; padding-top: 21px; font-size: 23px; line-height: 30px; font-weight: 700; }
.list p { margin: 0; padding-top: 20px; font-size: 16px; line-height: 22px; }
.total { height: 66px; text-align: center; }
.total h4 { margin: 0; padding-top: 1px; font-size: 18.72px; line-height: 65px; font-weight: 700; }
.edge { position: absolute; left: 0; right: 0; bottom: 0; height: 1px; background: linear-gradient(90deg, #1e2826 48px, #c4c4c4 48px, #c4c4c4 336px, #1e2826 336px, #1e2826 437px, #4d5856 437px, #4d5856 485px, #1e2826 485px); }
</style>
